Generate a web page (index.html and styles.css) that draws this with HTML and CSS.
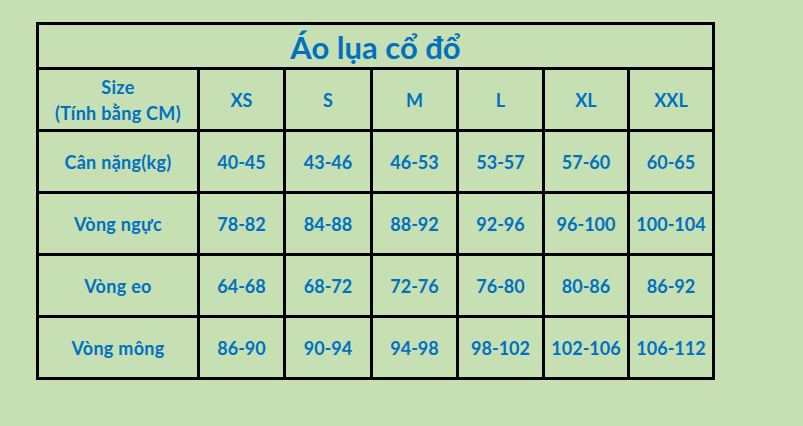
FILE: index.html
```html
<!DOCTYPE html>
<html lang="vi">
<head>
<meta charset="utf-8">
<title>Áo lụa cổ đổ</title>
<link rel="stylesheet" href="styles.css">
</head>
<body>
<div class="sheet">
  <div class="grid">
    <div class="cell title">Áo lụa cổ đổ</div>
    <div class="cell head">Size<br>(Tính bằng CM)</div>
    <div class="cell">XS</div>
    <div class="cell">S</div>
    <div class="cell">M</div>
    <div class="cell">L</div>
    <div class="cell">XL</div>
    <div class="cell">XXL</div>

    <div class="cell head">Cân nặng(kg)</div>
    <div class="cell">40-45</div>
    <div class="cell">43-46</div>
    <div class="cell">46-53</div>
    <div class="cell">53-57</div>
    <div class="cell">57-60</div>
    <div class="cell">60-65</div>

    <div class="cell head">Vòng ngực</div>
    <div class="cell">78-82</div>
    <div class="cell">84-88</div>
    <div class="cell">88-92</div>
    <div class="cell">92-96</div>
    <div class="cell">96-100</div>
    <div class="cell">100-104</div>

    <div class="cell head">Vòng eo</div>
    <div class="cell">64-68</div>
    <div class="cell">68-72</div>
    <div class="cell">72-76</div>
    <div class="cell">76-80</div>
    <div class="cell">80-86</div>
    <div class="cell">86-92</div>

    <div class="cell head">Vòng mông</div>
    <div class="cell">86-90</div>
    <div class="cell">90-94</div>
    <div class="cell">94-98</div>
    <div class="cell">98-102</div>
    <div class="cell">102-106</div>
    <div class="cell">106-112</div>
  </div>
</div>
</body>
</html>
```

FILE: styles.css
```css
html, body {
  margin: 0;
  padding: 0;
  background: #c6e0b4;
}
body {
  width: 803px;
  height: 426px;
  overflow: hidden;
  font-family: Lato, "Open Sans", "Liberation Sans", sans-serif;
  font-weight: 700;
  color: #0070c0;
}
.sheet {
  padding: 22px 0 0 36px;
}
.grid {
  display: grid;
  grid-template-columns: 158px 83px 84px 83px 83px 82px 82px;
  grid-template-rows: 42px repeat(5, 59px);
  gap: 3px;
  padding: 3px;
  background: #000;
  width: max-content;
}
.cell {
  background: #c6e0b4;
  display: flex;
  align-items: center;
  justify-content: center;
  text-align: center;
  font-size: 18px;
  line-height: 26px;
  white-space: nowrap;
}
.head {
  letter-spacing: 0.3px;
}
.title {
  grid-column: 1 / -1;
  font-size: 31px;
  padding-top: 2px;
}
```
